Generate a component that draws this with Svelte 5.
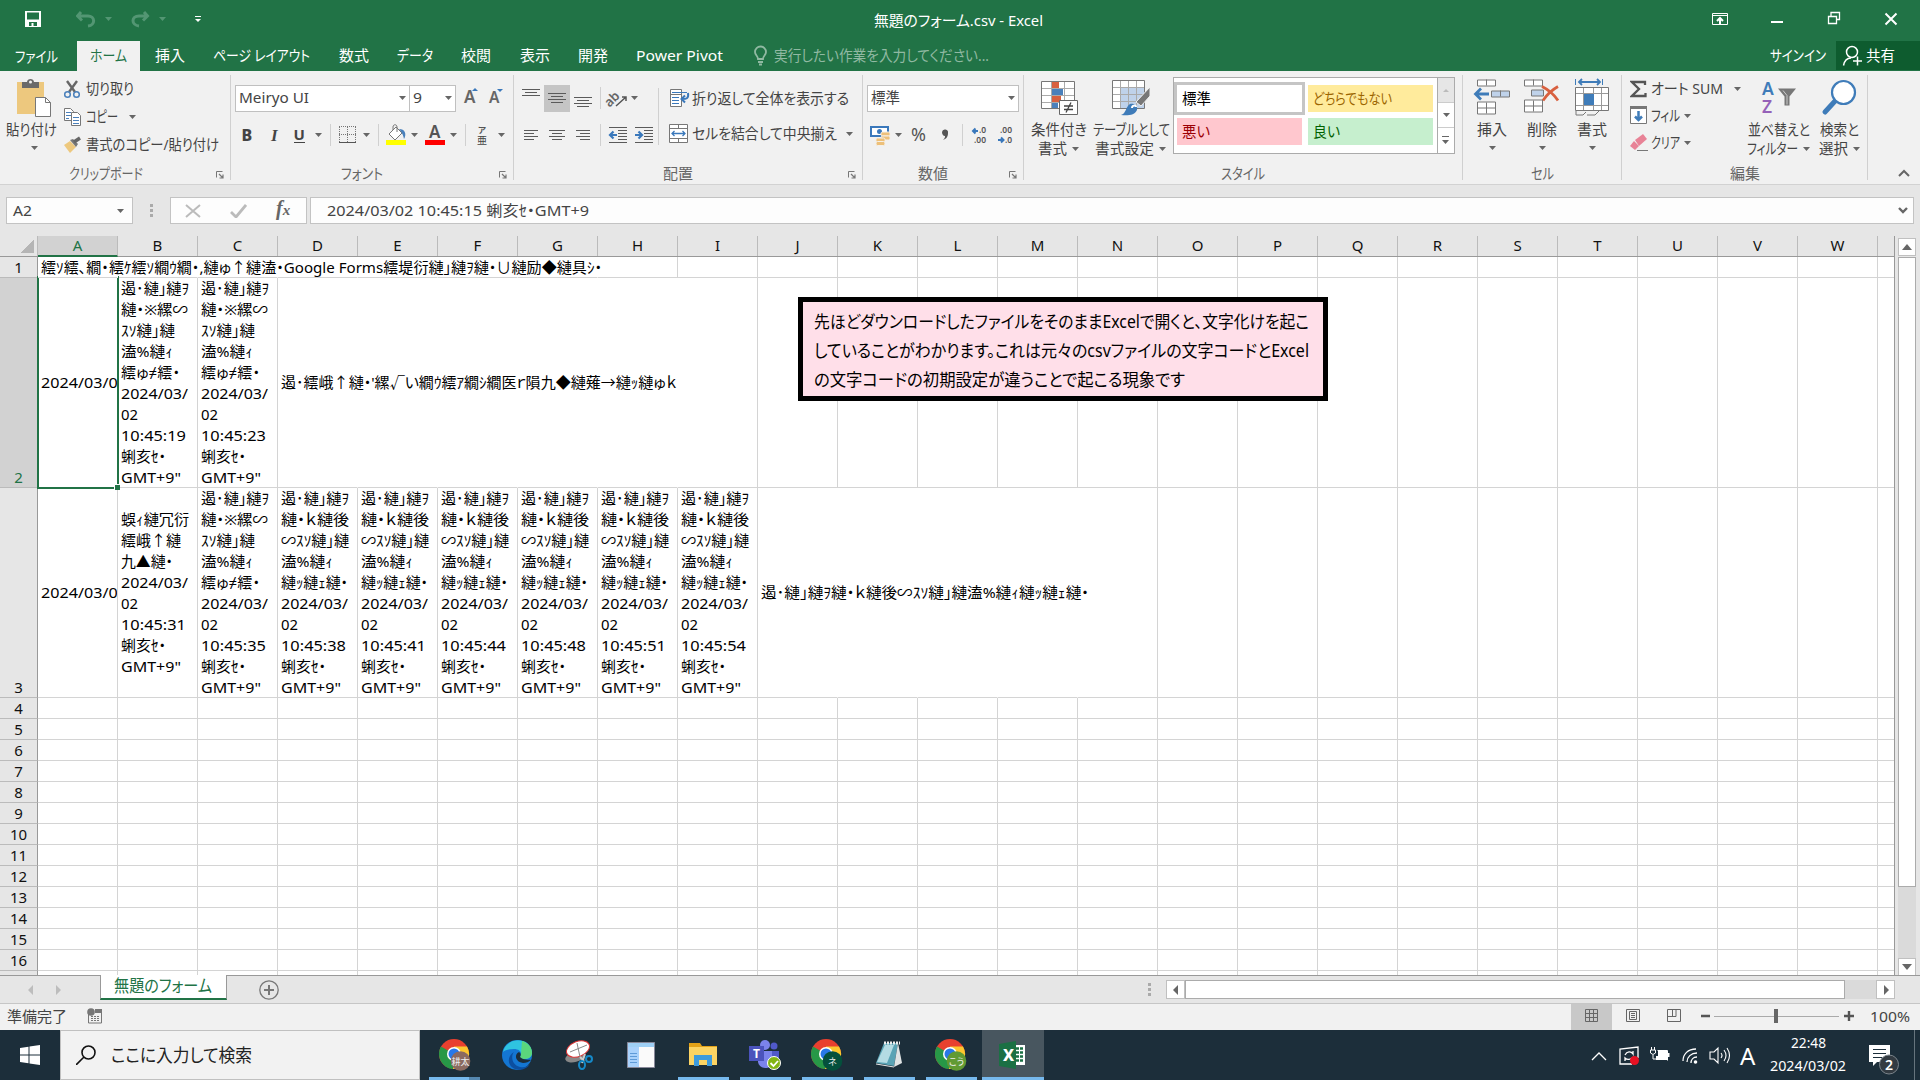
<script lang="ts">
	type Cell = { lines: [string, number][]; spill?: boolean };

	const columns = 'ABCDEFGHIJKLMNOPQRSTUVWX'.split('');

	function fit(node: HTMLElement, width: number) {
		const natural = node.getBoundingClientRect().width;
		node.style.transform = `scaleX(${width / natural})`;
		node.style.width = `${width}px`;
	}

	const tabs: [string, number, number][] = [
		['ファイル', 43, 77],
		['ホーム', 37, 63],
		['挿入', 30, 59],
		['ページ レイアウト', 97, 125],
		['数式', 30, 59],
		['データ', 36, 63],
		['校閲', 30, 59],
		['表示', 30, 59],
		['開発', 30, 58],
		['Power Pivot', 87, 115]
	];

	function answer(first: [string, number][], time: string): Cell {
		return {
			lines: [...first, ['2024/03/', 67], ['02', 17], [time, 65], ['蜊亥ｾ・', 45], ['GMT+9"', 60]]
		};
	}
	const used: [string, number][] = [
		['遏･縺｣縺ｦ', 68],
		['縺・※縲∽', 67],
		['ｽｿ縺｣縺', 54],
		['溘%縺ｨ', 52],
		['繧ゅ≠繧・', 59]
	];
	const notUsed: [string, number][] = [
		['遏･縺｣縺ｦ', 68],
		['縺・ｋ縺後', 68],
		['∽ｽｿ縺｣縺', 68],
		['溘%縺ｨ', 52],
		['縺ｯ縺ｪ縺・', 67]
	];
	const unknown: [string, number][] = [
		['蜈ｨ縺冗衍', 68],
		['繧峨↑縺', 60],
		['九▲縺・', 52]
	];
	const date: Cell = { lines: [['2024/03/02', 86]] };

	const cells: Record<string, Cell> = {
		A1: {
			lines: [['繧ｿ繧､繝・繧ｹ繧ｿ繝ｳ繝・,縺ゅ↑縺溘・Google Forms繧堤衍縺｣縺ｦ縺・∪縺励◆縺具ｼ・', 561]],
			spill: true
		},
		A2: date,
		B2: answer(used, '10:45:19'),
		C2: answer(used, '10:45:23'),
		D2: { lines: [["遏･繧峨↑縺・'縲√い繝ｳ繧ｱ繝ｼ繝医ｒ隕九◆縺薙→縺ｯ縺ゅｋ", 396]], spill: true },
		A3: date,
		B3: answer(unknown, '10:45:31'),
		C3: answer(used, '10:45:35'),
		D3: answer(notUsed, '10:45:38'),
		E3: answer(notUsed, '10:45:41'),
		F3: answer(notUsed, '10:45:44'),
		G3: answer(notUsed, '10:45:48'),
		H3: answer(notUsed, '10:45:51'),
		I3: answer(notUsed, '10:45:54'),
		J3: { lines: [['遏･縺｣縺ｦ縺・ｋ縺後∽ｽｿ縺｣縺溘%縺ｨ縺ｯ縺ｪ縺・', 328]], spill: true }
	};
	// columns whose right gridline is covered by overflowing text
	const covered: Record<number, string> = { 1: 'ABCDEFG', 2: 'DEFGH', 3: 'JKLM' };
	const rows = Array.from({ length: 17 }, (_, i) => i + 1);

	const line = (x1: number, x2: number, y: number) => `M${x1} ${y}.5H${x2}`;
	const grey = (d: string) => `<path d="${d}" stroke="#5a5a5a" fill="none"/>`;
	const down = (x: number, y: number, c = '#666') => `<path d="M${x - 3} ${y - 1}h7l-3.5 4z" fill="${c}"/>`;
	const bar = (x: number, y: number, h: number) => `<path d="M${x}.5 ${y}v${h}" stroke="#d0d0d0"/>`;
	const chrome = (badge: string, label: string) => `
		<circle cx="15" cy="15" r="15" fill="#e8402f"/>
		<path d="M15 15L2 7.500A15 15 0 0 0 14 30l7-11z" fill="#279847"/>
		<path d="M15 15l-1 15A15 15 0 0 0 28 7.500H15z" fill="#fcc72e"/>
		<circle cx="15" cy="15" r="7" fill="#fff"/><circle cx="15" cy="15" r="5.500" fill="#2878e8"/>
		<circle cx="21.500" cy="22" r="9.800" fill="${badge}"/>
		<text x="21.500" y="25.500" font-size="9" text-anchor="middle" fill="#eee">${label}</text>`;

	// box: x y width height of the drawing area, in window coordinates for the ribbon
	const icons: Record<string, [string, string]> = {
		save: ['24 10 18 18', '<path d="M25 11h16v16H25z" fill="#fff"/><path d="M27 12.500h12v7H27zM29 22h8v4h-8z" fill="#217346"/><path d="M31.500 23h2v4h-2z" fill="#fff"/>'],
		undo: ['76 10 37 20', `<path d="M81 12l-3.500 4 4.500 4.500M78 16h10c7 0 8 9 0 10" fill="none" stroke="#539673" stroke-width="3"/>${down(108, 18, '#539673')}`],
		redo: ['129 10 37 20', `<path d="M144 12l3.500 4-4.500 4.500M147 16h-8c-8 0-8 9 0 10" fill="none" stroke="#539673" stroke-width="3"/>${down(162, 18, '#539673')}`],
		more: ['193 10 10 16', '<path d="M195 16.500h6" stroke="#fff"/><path d="M195 19h6l-3 3z" fill="#fff"/>'],
		bulb: ['753 44 16 22', '<path d="M758 58c0-3-3-4-3-7a5.500 5.500 0 0 1 11 0c0 3-3 4-3 7zM758 61h5M759 63.500h3" fill="none" stroke="#90b9a2" stroke-width="1.800"/>'],
		display: ['1710 10 20 18', '<path d="M1712.500 13.500h15v11h-15zM1712 15.500h16" stroke="#fff" fill="none"/><path d="M1720 24v-6M1717 21l3-3 3 3" stroke="#fff" stroke-width="2" fill="none"/>'],
		minimize: ['1769 10 16 18', '<path d="M1771 22h12" stroke="#fff" stroke-width="2"/>'],
		restore: ['1826 10 16 18', '<path d="M1828.500 16.500h8v7h-8zM1831 16v-3.500h8.500v7H1837" stroke="#fff" fill="none" stroke-width="1.300"/>'],
		close: ['1883 10 16 18', '<path d="M1885.500 13.500l11 11M1896.500 13.500l-11 11" stroke="#fff" stroke-width="2"/>'],
		person: ['1842 44 21 23', '<circle cx="1852" cy="52" r="5.500" fill="none" stroke="#fff" stroke-width="1.500"/><path d="M1843.500 65.500c1-5 4-7.500 7.500-7.500M1853 61h9M1857.500 56.500v9" fill="none" stroke="#fff" stroke-width="1.500"/>'],

		paste: ['17 77 37 41', '<path d="M18 82h27v32H18z" fill="#edc87e"/><path d="M23 88v-6h5c0-4 7-4 7 0h5v6z" fill="#6a6a6a"/><circle cx="31.500" cy="82" r="1.500" fill="#f1f1f1"/><path d="M36.500 97.500h10l5 5v14h-15z" fill="#fff" stroke="#777"/><path d="M46.500 97.500v5h5" fill="none" stroke="#777"/>'],
		cut: ['64 79 18 19', '<path d="M67 80l8 11M77 80l-8 11" stroke="#666" stroke-width="2.400"/><circle cx="67.500" cy="93.500" r="2.800" fill="none" stroke="#4a80bb" stroke-width="1.500"/><circle cx="76.500" cy="93.500" r="2.800" fill="none" stroke="#4a80bb" stroke-width="1.500"/>'],
		copy: ['64 107 18 19', '<path d="M64.500 107.500h6l3 3v9h-9z" fill="#fff" stroke="#777"/><path d="M66 111.500h5M66 114.500h5M66 117.500h3" stroke="#4a80bb"/><path d="M71.500 111.500h6l3 3v10h-9z" fill="#fff" stroke="#777"/><path d="M73 116.500h6M73 119.500h6M73 122.500h6" stroke="#4a80bb"/>'],
		brush: ['64 135 18 18', '<path d="M64 144l6-4 6 6-6 6z" fill="#edc87e"/><path d="M70 139l3-1 5 5-2 3z" fill="#777"/><path d="M74 141l6-4" stroke="#666" stroke-width="3.500"/>'],
		launch: ['0 0 8 8', '<path d="M.5 6.500v-6h6" fill="none" stroke="#777"/><path d="M3 3l4 4M7 3.500V7H3.500" fill="none" stroke="#777" stroke-width="1.200"/>'],
		down: ['-4 -2 9 6', down(0, 0)],

		grow: ['463 86 20 26', '<text x="465" y="104" font-size="17" font-weight="600" fill="#666">A</text><path d="M473 92l3-3 3 3z" fill="#3a78bb"/>'],
		shrink: ['483 86 25 26', '<text x="490" y="104" font-size="15.500" font-weight="600" fill="#666">A</text><path d="M498 90h6l-3 3z" fill="#3a78bb"/>'],
		bold: ['235 121 24 28', '<text x="241.500" y="141" font-size="16" font-weight="800" fill="#444">B</text>'],
		italic: ['259 121 29 28', '<text x="271" y="141" font-size="17" font-weight="700" font-style="italic" fill="#444" font-family="Liberation Serif">I</text>'],
		under: ['288 121 46 28', `<text x="293.500" y="140" font-size="15" font-weight="700" fill="#444">U</text><path d="M294 142.500h11" stroke="#444"/>${down(318, 134)}${bar(330, 124, 22)}`],
		border: ['334 121 47 28', `<path d="M339 126.500h17M339.500 127v15M347.500 127v15M355.500 127v15M339 134.500h17" stroke="#777" stroke-dasharray="1 1"/><path d="M339 142.500h17" stroke="#555"/>${down(366, 134)}${bar(378, 124, 22)}`],
		fill: ['381 121 40 28', `<path d="M389 134l7-7 6 6-7 7z" fill="#fff" stroke="#777"/><path d="M393 130v-3c0-3 4-3 4 0v5" fill="none" stroke="#777"/><path d="M399 129c6 0 8 5 5 10-1-5-2-6-5-10" fill="#4a80bb"/><path d="M386 140h20v5h-20z" fill="#ff0"/>${down(414, 134)}`],
		color: ['421 121 48 28', `<text x="429" y="138" font-size="17" font-weight="600" fill="#555">A</text><path d="M425 140h20v5h-20z" fill="red"/>${down(453, 134)}${bar(465, 124, 22)}`],
		ruby: ['469 121 42 28', `<text x="478" y="133" font-size="8.500" font-weight="600" fill="#555">ア</text><text x="477" y="143.500" font-size="10" fill="#444">亜</text>${down(501, 134)}`],

		top: ['518 84 26 28', grey(line(522, 540, 89) + line(525, 537, 92) + line(522, 540, 95))],
		middle: ['544 84 26 28', '<path d="M544 85h26v27h-26z" fill="#c5c5c5"/>' + grey(line(548, 566, 93) + line(551, 563, 96) + line(548, 566, 99) + line(551, 563, 102))],
		bottom: ['570 84 33 28', grey(line(574, 592, 97) + line(577, 589, 100) + line(574, 592, 103) + line(577, 589, 106)) + bar(600, 87, 22)],
		orient: ['603 84 55 28', `<text x="605" y="103" font-size="13" font-weight="600" fill="#666" transform="rotate(-45 613 100)">ab</text><path d="M616 106l10-9M622 97h4v4" fill="none" stroke="#555" stroke-width="1.500"/>${down(634, 97)}`],
		left: ['518 121 27 28', grey(line(524, 538, 130) + line(524, 534, 133) + line(524, 538, 136) + line(524, 534, 139))],
		center: ['545 121 26 28', grey(line(549, 565, 130) + line(552, 562, 133) + line(549, 565, 136) + line(552, 562, 139))],
		right: ['571 121 32 28', grey(line(576, 590, 130) + line(580, 590, 133) + line(576, 590, 136) + line(580, 590, 139)) + bar(600, 124, 22)],
		outdent: ['603 121 27 28', grey(line(609, 627, 127) + line(618, 627, 130) + line(618, 627, 133) + line(618, 627, 136) + line(618, 627, 139) + line(609, 627, 142)) + '<path d="M617 135h-6M613.500 131.500l-3.500 3.500 3.500 3.500" fill="none" stroke="#3a78bb" stroke-width="2.200"/>'],
		indent: ['630 121 28 28', grey(line(635, 653, 127) + line(644, 653, 130) + line(644, 653, 133) + line(644, 653, 136) + line(644, 653, 139) + line(635, 653, 142)) + '<path d="M635 135h6M638.500 131.500l3.500 3.500-3.500 3.500" fill="none" stroke="#3a78bb" stroke-width="2.200"/>'],
		wrap: ['669 88 23 22', '<path d="M670.500 89.500h11v17h-11zM670 94.500h12" fill="#fff" stroke="#777"/><path d="M672 92.500h15M672 97.500h7M672 100.500h7M672 103.500h7" stroke="#3a78bb"/><path d="M688 93c1 6-2 6-6 6M685 95.500l-3.500 3.500 3.500 3.500" fill="none" stroke="#3a78bb" stroke-width="2"/>'],
		merge: ['669 124 23 22', '<path d="M669.500 125.500h18v18h-18zM669 129.500h19M669 139.500h19M678.500 126v4M678.500 140v4" fill="#fff" stroke="#777"/><path d="M672 134.500h13M674.500 132l-2.500 2.500 2.500 2.500M682.500 132l2.500 2.500-2.500 2.500" fill="none" stroke="#3a78bb" stroke-width="1.300"/>'],

		money: ['867 121 38 28', `<path d="M870 126h19v11h-19z" fill="#3a78bb"/><path d="M872 128h15v7h-15z" fill="#fff"/><circle cx="879.500" cy="131.500" r="2.500" fill="#3a78bb"/><g fill="#edc07a" stroke="#f5f0e8"><rect x="881" y="132" width="9" height="4" rx="1.500"/><rect x="881" y="136" width="9" height="4" rx="1.500"/><rect x="876" y="138" width="9" height="4" rx="1.500"/><rect x="876" y="141.500" width="9" height="4" rx="1.500"/></g>${down(898, 134)}`],
		percent: ['905 121 26 28', '<text x="911" y="141" font-size="18" fill="#555">%</text>'],
		comma: ['931 121 34 28', '<path d="M942 132a3 3 0 1 1 6 1c0 4-2 6-5 7 2-2 2-3 2-4-2 0-3-2-3-4" fill="#555"/>' + bar(962, 124, 22)],
		more0: ['965 121 27 28', '<g font-size="8.500" font-weight="600" fill="#555"><text x="979" y="133">.0</text><text x="974" y="143">.00</text></g><path d="M978 131h-5M975.500 128.500L973 131l2.500 2.500" fill="none" stroke="#3a78bb" stroke-width="2"/>'],
		less0: ['992 121 26 28', '<g font-size="8.500" font-weight="600" fill="#555"><text x="1000" y="133">.00</text><text x="1005" y="143">.0</text></g><path d="M998 140h5M1001 137.500l2.500 2.500-2.500 2.500" fill="none" stroke="#3a78bb" stroke-width="2"/>'],

		cond: ['1041 81 38 37', '<path d="M1041.500 83.500h33v27h-33z" fill="#fff" stroke="#777"/><path d="M1052 84h7v6h-7zM1052 98h9v6h-9z" fill="#d8603f"/><path d="M1052 91h11v6h-11zM1052 105h6v5h-6z" fill="#4a80bb"/><path d="M1042 90.500h32M1042 97.500h32M1042 104.500h32M1051.500 84v26M1064.500 84v26" stroke="#aaa" fill="none"/><path d="M1059.500 102.500h18v14h-18z" fill="#fff" stroke="#666"/><path d="M1064 108h9M1064 111.500h9M1071 104.500l-5 10" stroke="#444" stroke-width="1.300"/>'],
		table: ['1113 81 38 37', '<path d="M1113.500 82.500h32v28h-32z" fill="#fff" stroke="#777"/><path d="M1122 90h23v20h-23z" fill="#bfd2ea"/><path d="M1114 89.500h31M1114 96.500h31M1114 103.500h31M1121.500 83v27M1129.500 83v27M1137.500 83v27" stroke="#aaa"/><path d="M1151 89v9l-9 10-5-4z" fill="#777" stroke="#f1f1f1"/><path d="M1122 117c5-1 5-9 9-11 4-1 8 2 7 6-2 5-9 6-16 5" fill="#3f7cb9"/><path d="M1133 110c0-3 4-3 4-1" stroke="#fff" stroke-width="2" fill="none"/>'],
		insert: ['1472 79 38 38', '<g fill="#fff" stroke="#777"><path d="M1476.500 80.500h18v6h-18zM1485.500 80v6M1476.500 102.500h18v12h-18zM1476 108.500h18M1485.500 103v11"/><path d="M1490.500 91.500h18v6h-18zM1499.500 91v6" fill="#bfd2ea"/></g><path d="M1488 94.500h-13M1480 89l-5.500 5.500 5.500 5.500" fill="none" stroke="#3f7cb9" stroke-width="2.800"/>'],
		remove: ['1525 79 38 38', '<g fill="#fff" stroke="#777"><path d="M1526.500 80.500h18v6h-18zM1535.500 80v6M1526.500 100.500h18v12h-18zM1526 106.500h18M1535.500 101v11"/><path d="M1533.500 90.500h12v6h-12z" fill="#bfd2ea"/></g><path d="M1544 87c6 3 12 8 16 14M1560 87c-7 4-11 8-15 14" fill="none" stroke="#d8603f" stroke-width="2.800"/>'],
		format: ['1574 78 36 39', '<path d="M1575.500 79v6M1602.500 79v6" stroke="#3f7cb9"/><path d="M1579 82h20M1582 79l-3 3 3 3M1597 79l3 3-3 3" fill="none" stroke="#3f7cb9" stroke-width="1.800"/><path d="M1575.500 87.500h33v23h-33z" fill="#fff" stroke="#777"/><path d="M1583.500 88v22M1593.500 88v22M1601.500 88v22M1576 93.500h32M1576 105.500h32" stroke="#999"/><path d="M1584 94h10v11h-10z" fill="#3f7cb9"/><path d="M1576 111v4h7l3-3M1587 115h8l4-4" fill="none" stroke="#777"/>'],
		sum: ['1630 78 18 18', '<path d="M1645 83v-3h-13l7 7-7 7h13.500v-3" fill="none" stroke="#555" stroke-width="2.300"/>'],
		filldown: ['1630 105 18 19', '<path d="M1630.500 105.500h16v17h-16z" fill="#fff" stroke="#777"/><path d="M1630 105h17v3h-17z" fill="#777"/><path d="M1638.500 110v9M1635 115.500l3.500 3.500 3.500-3.500" fill="none" stroke="#3f7cb9" stroke-width="2.500"/>'],
		eraser: ['1631 132 18 18', '<path d="M1636 138l8-6 4 5-8 7z" fill="#e88296"/><path d="M1631 144l4-5 5 5-4 4z" fill="#e88296"/><path d="M1638 148.500h11" stroke="#777"/>'],
		sort: ['1760 79 38 36', '<text x="1762" y="94" font-size="17.500" font-weight="600" fill="#3f7cb9">A</text><text x="1762" y="112" font-size="17.500" font-weight="600" fill="#9561b8">Z</text><path d="M1778 88h18l-6.500 8v9h-5v-9z" fill="#777"/><path d="M1783 90l4 5v9" stroke="#ccc" fill="none"/>'],
		find: ['1820 79 37 37', '<path d="M1835 100l-11 12" stroke="#3f7cb9" stroke-width="5" stroke-linecap="round"/><circle cx="1842.500" cy="92.500" r="11.500" fill="#fff" stroke="#3f7cb9" stroke-width="2.200"/>'],

		windows: ['0 0 20 20', '<path d="M0 3l8.500-1.300v7.800H0zM9.500 1.500L20 0v9.500H9.500zM0 10.500h8.500v7.800L0 17zM9.500 10.500H20V20L9.500 18.500z" fill="#fff"/>'],
		search: ['0 0 20 20', '<circle cx="12.500" cy="7.500" r="6.500" fill="none" stroke="#111" stroke-width="1.600"/><path d="M8 12l-8 8" stroke="#111" stroke-width="1.600"/>'],
		chromeA: ['0 0 32 32', chrome('#8b6a60', '耕太')],
		chromeB: ['0 0 32 32', chrome('#04503c', 'ネ')],
		chromeC: ['0 0 32 32', chrome('#619a33', 'こう')],
		edge: ['0 0 30 30', '<circle cx="15" cy="15" r="15" fill="#1476d2"/><path d="M1 12C4-3 28-4 30 12c0 8-8 8-12 6 3-5 0-9-6-9-5 0-9 1-11 3" fill="#2fc3e0"/><path d="M20 1c6 2 10 6 10 12 0 6-8 7-12 5l1-4z" fill="#5bd67c"/><path d="M12 12c-3 3-3 13 6 15 5 1 8-1 10-3-4 7-16 8-20 1-3-5 0-11 4-13" fill="#0c4fa0"/><path d="M17 12c-5 2-4 10 4 11 3 0 6-1 8-3-3-1-7 1-11-3 1-2 1-4-1-5" fill="#1c2e3a"/>'],
		snip: ['0 0 28 30', '<ellipse cx="10" cy="17" rx="10" ry="5" fill="#888" transform="rotate(-15 10 17)"/><ellipse cx="13" cy="9" rx="12" ry="7.500" fill="#fff" stroke="#d33" transform="rotate(-22 13 9)"/><path d="M12 3l3 14M5 12l17-7" stroke="#888"/><path d="M15 17l4 4M20 14l-3 9" stroke="#ccc" stroke-width="2"/><circle cx="24" cy="19" r="3" fill="none" stroke="#1589c8" stroke-width="2"/><ellipse cx="17" cy="25" rx="3" ry="4" fill="none" stroke="#1589c8" stroke-width="2"/>'],
		panel: ['0 0 28 26', '<path d="M.5.500h27v25H.500z" fill="#fafafa" stroke="#889"/><path d="M1 1h26v4H1z" fill="#9fd0f5"/><path d="M1 5h11v20H1z" fill="#a9d2fc"/><path d="M3 11.500h7M3 14.500h7M3 17.500h7M3 20.500h7" stroke="#5f9bd8"/>'],
		folder: ['0 0 28 24', '<path d="M0 0h11l2 3h15v19H0z" fill="#e3a218"/><path d="M0 4h28v18H0z" fill="#fcd463"/><path d="M5 23V12h18v11h-5v-6h-8v6z" fill="#3e9bdc"/>'],
		teams: ['0 0 32 30', '<circle cx="16" cy="5" r="5" fill="#7b83eb"/><circle cx="25" cy="6" r="3.500" fill="#5059c9"/><path d="M20 11h10v10c0 6-8 6-10 2z" fill="#5059c9"/><path d="M9 11h14v11c0 8-13 8-14 0z" fill="#7b83eb"/><path d="M0 6h15v15H0z" fill="#4b53bc"/><text x="4" y="18" font-size="12" font-weight="700" fill="#fff">T</text><circle cx="25" cy="23" r="6.500" fill="#82b414" stroke="#fff"/><path d="M21.500 23l3 3 4.500-5" fill="none" stroke="#fff" stroke-width="1.800"/>'],
		notepad: ['0 0 28 28', '<path d="M9 2h14l-4 23L1 22z" fill="#5aa3b5"/><path d="M10 4h9l-7 18-10-1z" fill="#b4dbe3"/><path d="M23 2l4 20-8 4z" fill="#dfe3e4"/><path d="M9 2h16" stroke="#eee" stroke-width="3" stroke-dasharray="2 1"/><path d="M1 23l18 3" stroke="#e8e8e8" fill="none"/>'],
		excel: ['0 0 28 28', '<path d="M15 4h11v20H15z" fill="#fff"/><path d="M16 7.500h8M16 11.500h8M16 15.500h8M16 19.500h8" stroke="#1b7044" stroke-width="2.500"/><path d="M20.500 5v18" stroke="#fff"/><path d="M0 3l17-3v28L0 25z" fill="#1b7044"/><text x="4" y="20" font-size="16" font-weight="800" fill="#fff">X</text>'],
		tray: ['1588 1040 144 30', '<g fill="none" stroke="#fff" stroke-width="1.300"><path d="M1592 1060l7-7 7 7"/><path d="M1632 1064h-12v-15l18-2v11"/><path d="M1625 1055c2-4 6-4 8-1v-3M1633 1057c-2 3-6 3-8 1v3"/><path d="M1650.500 1050v3q2.500 3 5 0v-3zM1651.500 1047v3M1654.500 1047v3M1653 1055v4h3" stroke-width="1"/><path d="M1683 1061c0-7 5-12 13-12M1687 1062c0-5 4-9 10-9M1691 1063c0-3 2-6 6-6"/><path d="M1710 1052h4l4-4v15l-4-4h-4zM1721 1053q2 2.500 0 5M1724 1050q4 5.500 0 11M1727 1048q5 7.500 0 15" stroke-width="1.100"/></g><path d="M1658 1051h9v9h-11v-4h2zM1668 1053h1.500v4h-1.500z" fill="#fff"/><path d="M1657.500 1050.500h10v10" fill="none" stroke="#fff"/><circle cx="1695.500" cy="1062" r="1.800" fill="#fff"/><circle cx="1634.500" cy="1060.500" r="4.500" fill="#e81123"/>'],
		notice: ['1868 1040 33 38', '<path d="M1869 1045h21v17h-13l-4 4v-4h-4z" fill="#fff"/><path d="M1873 1049.500h13M1873 1053.500h13M1873 1057.500h9" stroke="#1c2e3a"/><circle cx="1889" cy="1064.500" r="9.500" fill="#333b42" stroke="#7c858c"/><text x="1885" y="1070" font-size="14" font-weight="600" fill="#fff">2</text>']
	};

	const taskbar: [string, string][] = [
		['chromeA', 'stacked'],
		['edge', ''],
		['snip', ''],
		['panel', ''],
		['folder', 'running'],
		['teams', 'running'],
		['chromeB', 'running'],
		['notepad', 'running'],
		['chromeC', 'running'],
		['excel', 'active']
	];
</script>

{#snippet icon(name: string)}
	{@const [box, body] = icons[name]}
	<svg viewBox={box} width={box.split(' ')[2]} height={box.split(' ')[3]}>{@html body}</svg>
{/snippet}

{#snippet label(text: string, width: number)}
	<span class="fit" use:fit={width}>{text}</span>
{/snippet}

{#snippet caption(text: string, width: number, launcher: boolean)}
	<div class="caption">
		{@render label(text, width)}
		{#if launcher}<i>{@render icon('launch')}</i>{/if}
	</div>
{/snippet}

<div class="window">
	<header class="title">
		<div class="quick">
			{@render icon('save')}
			{@render icon('undo')}
			{@render icon('redo')}
			{@render icon('more')}
		</div>
		<div class="name">{@render label('無題のフォーム.csv - Excel', 169)}</div>
		<div class="controls">
			{@render icon('display')}
			{@render icon('minimize')}
			{@render icon('restore')}
			{@render icon('close')}
		</div>
	</header>

	<nav class="tabs">
		{#each tabs as [text, width, box]}
			<div class="tab" class:current={text === 'ホーム'} style:width="{box}px">{@render label(text, width)}</div>
		{/each}
		<div class="tell">
			{@render icon('bulb')}
			{@render label('実行したい作業を入力してください...', 215)}
		</div>
		<div class="signin">{@render label('サインイン', 56)}</div>
		<div class="share">
			{@render icon('person')}
			{@render label('共有', 29)}
		</div>
	</nav>

	<section class="ribbon">
		<div class="group clipboard">
			<div class="body">
				<div class="big paste">
					{@render icon('paste')}
					{@render label('貼り付け', 51)}
					{@render icon('down')}
				</div>
				<div class="stack">
					<div>{@render icon('cut')}{@render label('切り取り', 48)}</div>
					<div>{@render icon('copy')}{@render label('コピー', 32)}<b>{@render icon('down')}</b></div>
					<div>{@render icon('brush')}{@render label('書式のコピー/貼り付け', 133)}</div>
				</div>
			</div>
			{@render caption('クリップボード', 74, true)}
		</div>

		<div class="group font">
			<div class="body rows">
				<div class="row">
					<div class="combo family">{@render label('Meiryo UI', 70)}{@render icon('down')}</div>
					<div class="combo size">{@render label('9', 9)}{@render icon('down')}</div>
					{@render icon('grow')}
					{@render icon('shrink')}
				</div>
				<div class="row">
					{#each ['bold', 'italic', 'under', 'border', 'fill', 'color', 'ruby'] as name}
						{@render icon(name)}
					{/each}
				</div>
			</div>
			{@render caption('フォント', 42, true)}
		</div>

		<div class="group align">
			<div class="body">
				<div class="rows">
					<div class="row">
						{#each ['top', 'middle', 'bottom', 'orient'] as name}
							{@render icon(name)}
						{/each}
					</div>
					<div class="row">
						{#each ['left', 'center', 'right', 'outdent', 'indent'] as name}
							{@render icon(name)}
						{/each}
					</div>
				</div>
				<div class="rows wrapping">
					<div class="row">{@render icon('wrap')}{@render label('折り返して全体を表示する', 157)}</div>
					<div class="row">{@render icon('merge')}{@render label('セルを結合して中央揃え', 145)}<b>{@render icon('down')}</b></div>
				</div>
			</div>
			{@render caption('配置', 30, true)}
		</div>

		<div class="group number">
			<div class="body rows">
				<div class="row">
					<div class="combo kind">{@render label('標準', 29)}{@render icon('down')}</div>
				</div>
				<div class="row">
					{#each ['money', 'percent', 'comma', 'more0', 'less0'] as name}
						{@render icon(name)}
					{/each}
				</div>
			</div>
			{@render caption('数値', 30, true)}
		</div>

		<div class="group styles">
			<div class="body">
				<div class="big cond">
					{@render icon('cond')}
					{@render label('条件付き', 56)}
					<div>{@render label('書式', 29)}{@render icon('down')}</div>
				</div>
				<div class="big table">
					{@render icon('table')}
					{@render label('テーブルとして', 77)}
					<div>{@render label('書式設定', 59)}{@render icon('down')}</div>
				</div>
				<div class="gallery">
					<div class="swatches">
						<div class="normal">{@render label('標準', 29)}</div>
						<div class="neutral">{@render label('どちらでもない', 79)}</div>
						<div class="bad">{@render label('悪い', 28)}</div>
						<div class="good">{@render label('良い', 27)}</div>
					</div>
					<div class="scroller">
						<div class="off"><svg width="7" height="4"><path d="M0 4h6L3 1z" fill="#bbb" /></svg></div>
						<div>{@render icon('down')}</div>
						<div><svg width="8" height="9"><path d="M0 .5h7" stroke="#666" /><path d="M0 4h7L3.500 8z" fill="#666" /></svg></div>
					</div>
				</div>
			</div>
			{@render caption('スタイル', 44, false)}
		</div>

		<div class="group cells">
			<div class="body">
				{#each [['insert', '挿入'], ['remove', '削除'], ['format', '書式']] as [name, text]}
					<div class="big">
						{@render icon(name)}
						{@render label(text, 30)}
						{@render icon('down')}
					</div>
				{/each}
			</div>
			{@render caption('セル', 23, false)}
		</div>

		<div class="group edit">
			<div class="body">
				<div class="stack">
					<div>{@render icon('sum')}{@render label('オート SUM', 72)}<b>{@render icon('down')}</b></div>
					<div>{@render icon('filldown')}{@render label('フィル', 29)}{@render icon('down')}</div>
					<div>{@render icon('eraser')}{@render label('クリア', 29)}{@render icon('down')}</div>
				</div>
				<div class="big sort">
					{@render icon('sort')}
					{@render label('並べ替えと', 62)}
					<div>{@render label('フィルター', 51)}{@render icon('down')}</div>
				</div>
				<div class="big find">
					{@render icon('find')}
					{@render label('検索と', 39)}
					<div>{@render label('選択', 29)}{@render icon('down')}</div>
				</div>
			</div>
			{@render caption('編集', 30, false)}
		</div>
		<svg class="collapse" width="12" height="8"><path d="M1 7l5-5 5 5" fill="none" stroke="#666" stroke-width="2" /></svg>
	</section>

	<section class="formula">
		<div class="box ref">{@render label('A2', 19)}{@render icon('down')}</div>
		<div class="dots"></div>
		<div class="box actions">
			<svg width="16" height="14"><path d="M1 1l14 12M15 1L1 13" stroke="#bbb" stroke-width="2" /></svg>
			<svg width="17" height="14"><path d="M1 8l5 5L16 1" fill="none" stroke="#bbb" stroke-width="2.800" /></svg>
			<em>f<small>x</small></em>
		</div>
		<div class="box value">
			{@render label('2024/03/02 10:45:15 蜊亥ｾ・GMT+9', 262)}
			<svg width="10" height="7"><path d="M1 1l4 4 4-4" fill="none" stroke="#666" stroke-width="2.400" /></svg>
		</div>
	</section>

	<section class="sheet">
		<div class="grid">
			<div class="heads">
				<div class="corner"></div>
				{#each columns as col}
					<div class="head" class:picked={col === 'A'}>{col === 'X' ? '' : col}</div>
				{/each}
			</div>
			{#each rows as row}
				<div class="line" class:tall={row === 2 || row === 3}>
					<div class="num" class:picked={row === 2}>{row < 17 ? row : ''}</div>
					{#each columns as col}
						{@const cell = cells[col + row]}
						<div
							class="cell"
							class:open={covered[row]?.includes(col)}
							class:spill={cell?.spill}
							class:selected={col + row === 'A2'}
						>
							{#if cell}
								{#each cell.lines as [text, width]}
									<div>{@render label(text, width)}</div>
								{/each}
							{/if}
						</div>
					{/each}
				</div>
			{/each}
			<div class="callout">
				<div>{@render label('先ほどダウンロードしたファイルをそのままExcelで開くと、文字化けを起こ', 495)}</div>
				<div>{@render label('していることがわかります。これは元々のcsvファイルの文字コードとExcel', 495)}</div>
				<div>{@render label('の文字コードの初期設定が違うことで起こる現象です', 371)}</div>
			</div>
		</div>
		<div class="vscroll">
			<div class="end"><svg width="10" height="6"><path d="M0 6h10L5 0z" fill="#666" /></svg></div>
			<div class="thumb"></div>
			<div class="track"></div>
			<div class="end"><svg width="10" height="6"><path d="M0 0h10L5 6z" fill="#666" /></svg></div>
		</div>
	</section>

	<section class="sheets">
		<svg class="arrows" width="100" height="28"><path d="M33 9v10l-5-5zM56 9v10l5-5z" fill="#bdbdbd" /></svg>
		<div class="sheettab">{@render label('無題のフォーム', 98)}</div>
		<svg class="plus" width="20" height="20"><circle cx="10" cy="10" r="9.200" fill="none" stroke="#777" stroke-width="1.300" /><path d="M5 10h10M10 5v10" stroke="#777" stroke-width="2" /></svg>
		<div class="dots"></div>
		<div class="hscroll">
			<div class="end"><svg width="6" height="10"><path d="M5 0v10L0 5z" fill="#666" /></svg></div>
			<div class="thumb"></div>
			<div class="track"></div>
			<div class="end"><svg width="6" height="10"><path d="M1 0v10l5-5z" fill="#666" /></svg></div>
		</div>
	</section>

	<footer class="status">
		{@render label('準備完了', 60)}
		<svg class="macro" width="16" height="16"><path d="M1.500 6v9h13V3" fill="none" stroke="#777" /><path d="M8 1h7v4H8z" fill="#777" /><circle cx="4" cy="4" r="3.800" fill="#777" /><path d="M4 8.500h9M4 10.500h9M4 12.500h9" stroke="#777" stroke-dasharray="2 1" /></svg>
		<div class="view on"><svg width="14" height="14"><path d="M.5.500h12v12H.500zM4.500 0v13M8.500 0v13M0 4.500h13M0 8.500h13" fill="none" stroke="#666" /></svg></div>
		<div class="view"><svg width="14" height="14"><path d="M.5.500h13v12H.500zM3.500 2.500h7v8h-7zM5 4.500h4M5 6.500h4M5 8.500h4" fill="none" stroke="#666" /></svg></div>
		<div class="view"><svg width="14" height="14"><path d="M.5.500h13v12H.500zM1 7.500h8V1M5.500 1v6" fill="none" stroke="#666" /></svg></div>
		<svg class="zoom" width="158" height="16"><path d="M1 8h9M144 8h10M149 3v10" stroke="#555" stroke-width="2.400" /><path d="M14 8.500h125" stroke="#aaa" /><path d="M74 1h4v14h-4z" fill="#666" /></svg>
		{@render label('100%', 40)}
	</footer>

	<footer class="taskbar">
		<div class="start">{@render icon('windows')}</div>
		<div class="search">{@render icon('search')}{@render label('ここに入力して検索', 141)}</div>
		<div class="apps">
			{#each taskbar as [name, state]}
				<div class="app {state}">{@render icon(name)}</div>
			{/each}
		</div>
		{@render icon('tray')}
		<div class="ime">A</div>
		<div class="clock">
			{@render label('22:48', 35)}
			{@render label('2024/03/02', 76)}
		</div>
		{@render icon('notice')}
		<div class="desktop"></div>
	</footer>
</div>

<style>
	:global(body) {
		margin: 0;
		overflow: hidden;
	}

	* {
		box-sizing: border-box;
	}

	.window {
		width: 1920px;
		height: 1080px;
		display: flex;
		flex-direction: column;
		overflow: hidden;
		background: #e6e6e6;
		color: #444;
		font: 15px/18px 'Noto Sans', 'Noto Sans CJK JP', sans-serif;
		font-feature-settings: 'palt';
	}

	svg {
		display: block;
		flex: none;
	}

	.fit {
		display: inline-block;
		flex: none;
		white-space: pre;
		transform-origin: 0 50%;
	}

	.tabs .fit,
	.ribbon .fit,
	.formula .fit,
	.callout .fit,
	.status .fit {
		translate: 0 -1px;
	}

	.title {
		display: flex;
		height: 41px;
		background: #217346;
		color: #fff;
	}

	.quick {
		display: flex;
		width: 874px;
		padding: 10px 0 0 24px;
	}

	.quick :global(svg:nth-child(2)) {
		margin-left: 34px;
	}

	.quick :global(svg:nth-child(3)) {
		margin-left: 16px;
	}

	.quick :global(svg:nth-child(4)) {
		margin-left: 27px;
	}

	.name {
		width: 836px;
		padding-top: 11px;
	}

	.controls {
		display: flex;
		gap: 41px;
		padding-top: 10px;
	}

	.controls :global(svg:first-child) {
		margin-right: -2px;
	}

	.tabs {
		display: flex;
		height: 30px;
		background: #217346;
		color: #fff;
	}

	.tab {
		display: flex;
		align-items: center;
		justify-content: center;
		flex: none;
		padding-bottom: 1px;
	}

	.tab:first-child {
		padding: 1px 5px 0 0;
	}

	.tab.current {
		background: #f1f1f1;
		color: #217346;
	}

	.tell {
		display: flex;
		flex: 1;
		gap: 5px;
		align-items: center;
		padding-left: 16px;
		color: #90b9a2;
	}

	.signin {
		width: 66px;
		padding-top: 6px;
		flex: none;
	}

	.share {
		display: flex;
		align-items: center;
		gap: 3px;
		width: 84px;
		height: 29px;
		padding-left: 6px;
		background: #0e5c2f;
	}

	.ribbon {
		display: flex;
		height: 114px;
		background: #f1f1f1;
		border-bottom: 1px solid #d2d2d2;
	}

	.group {
		display: flex;
		flex-direction: column;
		flex: none;
		height: 105px;
		margin-top: 4px;
		border-right: 1px solid #d0d0d0;
	}

	.body {
		display: flex;
		flex: none;
		height: 90px;
	}

	.caption {
		display: flex;
		flex: none;
		align-items: center;
		justify-content: center;
		position: relative;
		height: 18px;
		color: #666;
	}

	.caption i {
		position: absolute;
		right: 6px;
		top: 6px;
	}

	.clipboard {
		width: 231px;
	}

	.clipboard .caption {
		padding-right: 18px;
	}

	.font {
		width: 283px;
	}

	.align {
		width: 349px;
	}

	.number {
		width: 161px;
	}

	.font .caption,
	.align .caption,
	.number .caption {
		padding-right: 20px;
	}

	.styles {
		width: 439px;
	}

	.cells {
		width: 159px;
	}

	.edit {
		width: 246px;
	}

	.big {
		display: flex;
		flex-direction: column;
		align-items: center;
		padding-top: 2px;
	}

	.big > :global(svg:first-child) {
		height: 41px;
		margin-bottom: 3px;
	}

	.big > :global(svg:last-child) {
		margin-top: 6px;
	}

	.big > div {
		display: flex;
		align-items: center;
		gap: 4px;
		height: 20px;
	}

	.paste {
		width: 64px;
		padding-right: 1px;
	}

	.paste > :global(svg) {
		margin-left: 5px;
	}

	.stack > div {
		display: flex;
		align-items: center;
		height: 28px;
		gap: 4px;
	}

	.stack b {
		margin-left: 6px;
	}

	.rows {
		display: flex;
		flex-direction: column;
		gap: 9px;
		padding: 9px 0 0 4px;
	}

	.row {
		display: flex;
		align-items: center;
		height: 28px;
	}

	.wrapping {
		gap: 0;
		height: 57px;
		margin-top: 13px;
		padding: 0 0 0 10px;
		border-left: 1px solid #d0d0d0;
		justify-content: space-between;
	}

	.wrapping .row {
		height: 22px;
	}

	.wrapping b {
		margin-left: 8px;
	}

	.combo {
		display: flex;
		align-items: center;
		justify-content: space-between;
		height: 27px;
		padding: 0 2px 0 3px;
		border: 1px solid #c0c0c0;
		background: #fff;
		flex: none;
	}

	.family {
		width: 175px;
	}

	.size {
		width: 47px;
		margin: 0 6px 0 -1px;
	}

	.kind {
		width: 152px;
	}

	.styles .body {
		padding-left: 1px;
	}

	.cond {
		width: 67px;
	}

	.cond > :global(svg:first-child) {
		margin-left: 3px;
	}

	.table {
		width: 78px;
	}

	.gallery {
		display: flex;
		width: 282px;
		height: 77px;
		margin: 2px 0 0 3px;
		border: 1px solid #ababab;
		background: #fff;
	}

	.swatches {
		display: grid;
		grid-template-columns: 125px 125px;
		grid-template-rows: 27px 27px;
		gap: 6px;
		width: 263px;
		padding: 7px 0 0 3px;
	}

	.swatches div {
		display: flex;
		align-items: center;
		padding-left: 5px;
	}

	.normal {
		outline: 3px solid #c5c5c5;
		color: #000;
	}

	.neutral {
		background: #ffeb9c;
		color: #9c6500;
	}

	.bad {
		background: #ffc7ce;
		color: #9c0006;
	}

	.good {
		background: #c6efce;
		color: #006100;
	}

	.scroller {
		width: 17px;
		border-left: 1px solid #ababab;
	}

	.scroller div {
		display: flex;
		align-items: center;
		justify-content: center;
		height: 25px;
		border-bottom: 1px solid #ccc;
	}

	.scroller div:last-child {
		border: 0;
	}

	.scroller .off {
		background: #e6e6e6;
	}

	.cells .body {
		padding-left: 4px;
	}

	.cells .big {
		width: 50px;
	}

	.edit .stack {
		width: 123px;
		padding-left: 8px;
	}

	.edit .stack > div {
		height: 27px;
		gap: 3px;
	}

	.edit b {
		margin-left: 7px;
	}

	.sort {
		width: 67px;
	}

	.find {
		width: 53px;
		margin-left: 1px;
	}

	.collapse {
		margin: 98px 0 0 30px;
	}

	.formula {
		display: flex;
		height: 51px;
		padding: 12px 0 0 6px;
	}

	.box {
		display: flex;
		align-items: center;
		height: 27px;
		border: 1px solid #c3c3c3;
		background: #fdfdfd;
	}

	.ref {
		width: 127px;
		padding: 0 7px 0 6px;
		justify-content: space-between;
	}

	.dots {
		width: 3px;
		height: 13px;
		background: repeating-linear-gradient(#aaa 0 3px, transparent 3px 5px);
	}

	.formula .dots {
		margin: 7px 19px 0 17px;
		flex: none;
	}

	.actions {
		width: 137px;
		margin-left: -2px;
		padding-left: 14px;
		gap: 29px;
	}

	.actions em {
		margin-top: -3px;
		font: italic bold 20px/22px 'Liberation Serif', serif;
		color: #666;
	}

	.actions small {
		font-size: 15px;
	}

	.value {
		width: 1604px;
		margin-left: 3px;
		padding: 0 5px 0 16px;
		justify-content: space-between;
	}

	.sheet {
		display: flex;
		height: 739px;
	}

	.grid {
		position: relative;
		width: 1895px;
		height: 739px;
		overflow: hidden;
		border-right: 1px solid #999;
		color: #111;
	}

	.heads {
		display: flex;
		height: 21px;
		border-bottom: 1px solid #999;
	}

	.corner {
		flex: none;
		width: 38px;
		border-right: 1px solid #bbb;
		background: linear-gradient(135deg, transparent 50%, #b5b5b5 50%) 21px 4px / 13px 13px no-repeat;
	}

	.head {
		flex: none;
		width: 80px;
		height: 20px;
		border-right: 1px solid #bbb;
		text-align: center;
		line-height: 19px;
	}

	.head.picked {
		height: 21px;
		background: #d2d2d2;
		border-bottom: 2px solid #217346;
		color: #217346;
	}

	.line {
		display: flex;
		height: 21px;
	}

	.line.tall {
		height: 210px;
	}

	.num {
		display: flex;
		align-items: flex-end;
		justify-content: center;
		flex: none;
		width: 38px;
		border-right: 1px solid #999;
		border-bottom: 1px solid #bbb;
		background: #e6e6e6;
		line-height: 20px;
	}

	.num.picked {
		background: #d2d2d2;
		color: #217346;
	}

	.cell {
		display: flex;
		flex-direction: column;
		justify-content: center;
		flex: none;
		width: 80px;
		padding-left: 3px;
		border-right: 1px solid #d4d4d4;
		border-bottom: 1px solid #d4d4d4;
		background: #fff;
		color: #000;
		overflow: hidden;
		line-height: 20px;
	}

	.cell div {
		height: 21px;
		flex: none;
	}

	.cell.open {
		border-right-color: #fff;
	}

	.cell.spill {
		position: relative;
		overflow: visible;
		z-index: 1;
	}

	.cell.selected {
		position: relative;
		overflow: visible;
		clip-path: inset(-2px -5px -5px -2px);
	}

	.cell.selected div {
		overflow: hidden;
	}

	.cell.selected::before {
		content: '';
		position: absolute;
		inset: -2px -2px -2px -1px;
		border: 2px solid #217346;
		z-index: 2;
	}

	.cell.selected::after {
		content: '';
		position: absolute;
		right: -3px;
		bottom: -3px;
		width: 5px;
		height: 5px;
		border: 1px solid #fff;
		border-width: 1px 0 0 1px;
		background: #217346;
		z-index: 3;
		box-sizing: content-box;
	}

	.callout {
		position: absolute;
		left: 798px;
		top: 61px;
		z-index: 4;
		width: 530px;
		height: 104px;
		padding: 6px 0 0 11px;
		border: 5px solid #000;
		background: #ffdfe9;
		color: #000;
		font-size: 17.5px;
		line-height: 29px;
	}

	.callout div {
		height: 29px;
	}

	.vscroll {
		display: flex;
		flex-direction: column;
		width: 18px;
		margin: 2px 0 -1px 3px;
	}

	.end {
		display: flex;
		align-items: center;
		justify-content: center;
		flex: none;
		border: 1px solid #c0c0c0;
		background: #fff;
	}

	.vscroll .end {
		height: 18px;
	}

	.thumb {
		border: 1px solid #ababab;
		background: #fff;
	}

	.vscroll .thumb {
		height: 630px;
		margin-top: 1px;
	}

	.track {
		flex: 1;
		background: #dadada;
	}

	.sheets {
		display: flex;
		height: 28px;
		border-top: 1px solid #999;
	}

	.sheettab {
		width: 127px;
		height: 25px;
		margin-top: -1px;
		padding: 2px 0 0 13px;
		border: 1px solid #999;
		border-width: 0 1px;
		border-bottom: 2px solid #217346;
		background: #fff;
		color: #217346;
		font-size: 17px;
	}

	.plus {
		margin: 4px 871px 0 32px;
	}

	.sheets .dots {
		margin: 7px 15px 0 -2px;
	}

	.hscroll {
		display: flex;
		width: 729px;
		height: 19px;
		margin-top: 4px;
	}

	.hscroll .end {
		width: 19px;
	}

	.hscroll .thumb {
		width: 660px;
	}

	.status {
		display: flex;
		align-items: center;
		height: 27px;
		padding-left: 7px;
		border-top: 1px solid #c6c6c6;
		background: #f1f1f1;
	}

	.macro {
		margin: -2px 1468px 0 20px;
	}

	.view {
		display: flex;
		align-items: center;
		justify-content: center;
		flex: none;
		width: 41px;
		height: 26px;
		padding-bottom: 2px;
	}

	.view.on {
		background: #c8c8c8;
	}

	.zoom {
		margin: -2px 12px 0 6px;
	}

	.taskbar {
		display: flex;
		height: 50px;
		background: #1c2e3a;
		color: #fff;
	}

	.start {
		display: flex;
		align-items: center;
		justify-content: center;
		width: 60px;
	}

	.search {
		display: flex;
		align-items: center;
		gap: 15px;
		width: 360px;
		padding-left: 15px;
		border: 1px solid #c0c0c0;
		background: #f2f2f2;
		color: #222;
		font-size: 18px;
	}

	.apps {
		display: flex;
		width: 1168px;
		padding-left: 4px;
	}

	.app {
		display: flex;
		align-items: center;
		justify-content: center;
		width: 62px;
		border: solid transparent;
		border-width: 3px 0;
	}

	.running {
		background: linear-gradient(#76b9ed, #76b9ed) 50% 100% / 51px 3px no-repeat border-box;
	}

	.stacked {
		background:
			linear-gradient(#76b9ed, #76b9ed) 5px 100% / 40px 3px no-repeat border-box,
			linear-gradient(#5588b0, #5588b0) 45px 100% / 11px 3px no-repeat border-box;
	}

	.active {
		background: linear-gradient(#76b9ed, #76b9ed) 0 100% / 100% 3px no-repeat border-box #48565f;
	}

	.taskbar > :global(svg) {
		margin-top: 10px;
	}

	.ime {
		width: 38px;
		padding: 15px 0 0 8px;
		font-size: 24px;
		line-height: 22px;
	}

	.clock {
		display: flex;
		flex-direction: column;
		align-items: center;
		width: 76px;
		padding-top: 4px;
		margin-right: 22px;
		gap: 5px;
		font-size: 14px;
	}

	.desktop {
		width: 1px;
		margin-left: 13px;
		background: #66747d;
	}
</style>
